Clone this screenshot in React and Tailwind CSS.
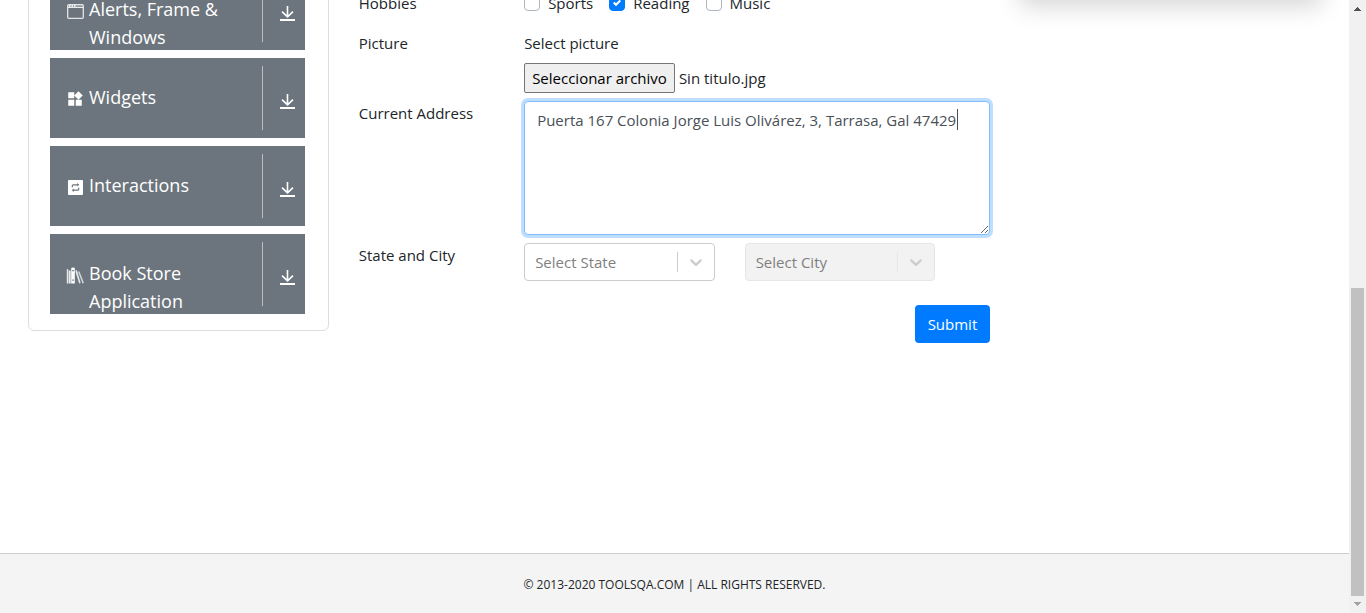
import React from "react";
import { MdWidgets } from "react-icons/md";

function WindowIcon() {
  return (
    <svg viewBox="0 0 17 15" className="h-[15px] w-[17px]" fill="none" stroke="currentColor" aria-hidden="true">
      <rect x="0.7" y="0.7" width="15.6" height="13.6" rx="1" strokeWidth="1.3" strokeOpacity="0.8" />
      <path d="M1 3.5h15" strokeOpacity="0.85" />
      <path d="M1 2h15" strokeWidth="2" strokeOpacity="0.25" />
      <path d="M2 2h1.5M4.5 2H6M7 2h1.5" strokeWidth="1.4" />
    </svg>
  );
}

function RepeatIcon() {
  return (
    <svg viewBox="0 0 15 15" className="size-[15px]" aria-hidden="true">
      <rect width="15" height="15" rx="1" fill="currentColor" />
      <g fill="none" stroke="#6c757d" strokeWidth="1.2" strokeLinejoin="round">
        <path d="M4.3 7.3V5.8q0-1 1-1h4.5M10.7 7.7v1.5q0 1-1 1H5.2" />
      </g>
      <path d="M9.2 3.1v3.4l2.1-1.7zM5.8 8.5v3.4l-2.1-1.7z" fill="#6c757d" />
    </svg>
  );
}

function BooksIcon() {
  return (
    <svg viewBox="0 0 18 17" className="h-[17px] w-[18px]" fill="currentColor" aria-hidden="true">
      <path d="M0.8 2.2l1.4-.2v14.5H0.8zM2.7 3.5h2v13h-2z" opacity="0.85" />
      <path d="M5.2 1.2l.8-.7 2.8.2v15.8H5.2zM6.2 3v1.2h1.6V3zM6.2 12.6v1.2h1.6v-1.2z" fillRule="evenodd" />
      <path d="M9.5 3.4l1.4-.5 3.8 13.2-1.5.4L9.5 5z" opacity="0.8" />
      <path d="M12 4.7l1.4-.5 4.6 11.7-1.5.6z" opacity="0.7" />
    </svg>
  );
}

function ArrowDownIcon() {
  return (
    <svg viewBox="0 0 15 15" className="size-[15px]" fill="none" stroke="currentColor" aria-hidden="true">
      <path d="M7.5 0v10.8M2 5.6l5.5 5.2 5.5-5.2" strokeWidth="1.6" />
      <path d="M0 14h15" strokeWidth="2" />
    </svg>
  );
}

function Chevron() {
  return (
    <svg viewBox="0 0 20 20" className="size-5" fill="currentColor" aria-hidden="true">
      <path d="M4.516 7.548c0.436-0.446 1.043-0.481 1.576 0l3.908 3.747 3.908-3.747c0.533-0.481 1.141-0.446 1.574 0 0.436 0.445 0.408 1.197 0 1.615-0.406 0.418-4.695 4.502-4.695 4.502-0.217 0.223-0.502 0.335-0.787 0.335s-0.57-0.112-0.789-0.335c0 0-4.287-4.084-4.695-4.502s-0.436-1.17 0-1.615z" />
    </svg>
  );
}

const groups = [
  { label: "Alerts, Frame & Windows", icon: <WindowIcon /> },
  { label: "Widgets", icon: <MdWidgets className="size-[18px]" /> },
  { label: "Interactions", icon: <RepeatIcon /> },
  { label: "Book Store Application", icon: <BooksIcon /> },
];

function Sidebar() {
  return (
    <nav className="-mt-8 rounded-md border border-[#dcdddf] pt-px pr-[23px] pb-4 pl-[21px]">
      <ul className="flex flex-col gap-2">
        {groups.map((g) => (
          <li key={g.label}>
            <button
              type="button"
              className="flex h-20 w-full items-start overflow-hidden bg-[#6c757d] py-2 text-left text-lg leading-7 text-white"
            >
              <span className="flex flex-1 gap-[5px] pt-[17px] pl-4">
                <span className="flex h-8 w-[18px] shrink-0 items-center justify-center">{g.icon}</span>
                <span className="max-w-36">{g.label}</span>
              </span>
              <span className="flex h-16 w-[43px] shrink-0 items-center justify-center border-l border-[#bdbdbd] pt-1.5 pl-2">
                <ArrowDownIcon />
              </span>
            </button>
          </li>
        ))}
      </ul>
    </nav>
  );
}

function Hobby({ id, label, checked }) {
  return (
    <span className="flex items-center gap-2">
      <span className="relative size-4">
        <input
          id={id}
          type="checkbox"
          defaultChecked={checked}
          className="peer block size-4 appearance-none rounded border border-[#adb5bd] bg-white checked:border-[#007bff] checked:bg-[#007bff]"
        />
        <svg viewBox="0 0 8 8" className="pointer-events-none absolute inset-1 hidden size-2 peer-checked:block" aria-hidden="true">
          <path fill="#fff" d="M6.564.75l-3.59 3.612-1.538-1.55L0 4.26l2.974 2.99L8 2.193z" />
        </svg>
      </span>
      <label htmlFor={id}>{label}</label>
    </span>
  );
}

function SelectBox({ id, label, disabled }) {
  return (
    <div className="w-4/9 px-[15px]">
      <div className="relative">
        <select
          id={id}
          aria-label={label}
          disabled={disabled}
          className="block h-[38px] w-full appearance-none rounded border border-[#cccccc] bg-white px-2.5 text-[#808080] disabled:border-[#e6e6e6] disabled:bg-[#f2f2f2] disabled:opacity-100"
        >
          <option>{label}</option>
        </select>
        <span
          className={
            disabled
              ? "pointer-events-none absolute inset-y-[9px] right-px flex items-center border-l border-[#e6e6e6] px-2 text-[#cccccc]"
              : "pointer-events-none absolute inset-y-[9px] right-px flex items-center border-l border-[#cccccc] px-2 text-[#cccccc]"
          }
        >
          <Chevron />
        </span>
      </div>
    </div>
  );
}

function Row({ title, htmlFor, children }) {
  return (
    <div className="-mx-[15px] flex">
      <label htmlFor={htmlFor} className="w-1/4 px-[15px]">{title}</label>
      <div className="w-3/4 px-[15px]">{children}</div>
    </div>
  );
}

function PracticeForm() {
  return (
    <form className="-mt-[9px]" onSubmit={(e) => e.preventDefault()}>
      <div className="mb-4">
        <Row title="Hobbies" htmlFor="hobby-sports">
          <div className="flex gap-4">
            <Hobby id="hobby-sports" label="Sports" />
            <Hobby id="hobby-reading" label="Reading" checked />
            <Hobby id="hobby-music" label="Music" />
          </div>
        </Row>
      </div>
      <div className="flex flex-col gap-2">
        <Row title="Picture" htmlFor="picture">
          <span className="mb-2 block">Select picture</span>
          <div className="flex items-center gap-1">
            <input id="picture" type="file" className="sr-only" />
            <label htmlFor="picture" className="h-[30px] rounded-xs border border-[#767676] bg-[#efefef] px-[7px] leading-7 text-black">
              Seleccionar archivo
            </label>
            <span>Sin titulo.jpg</span>
          </div>
        </Row>
        <Row title="Current Address" htmlFor="address">
          <div className="relative">
            <textarea
              id="address"
              rows={5}
              spellCheck={false}
              defaultValue="Puerta 167 Colonia Jorge Luis Olivárez, 3, Tarrasa, Gal 47429"
              className="block w-full rounded border border-[#80bdff] bg-white px-3 py-1.5 leading-6 text-[#495057] ring-3 ring-[#007bff]/25 outline-none"
            />
            <span className="absolute top-2 left-[433px] h-[21px] w-px bg-[#495057]" />
          </div>
        </Row>
        <Row title="State and City" htmlFor="state">
          <div className="-mx-[15px] flex">
            <SelectBox id="state" label="Select State" />
            <SelectBox id="city" label="Select City" disabled />
          </div>
        </Row>
      </div>
      <div className="mt-6 flex justify-end">
        <button type="submit" className="h-[38px] rounded bg-[#007bff] px-[13px] text-white">
          Submit
        </button>
      </div>
    </form>
  );
}

function ScrollBar() {
  return (
    <div className="flex w-[17px] shrink-0 flex-col items-center bg-[#f1f1f1]" aria-hidden="true">
      <svg viewBox="0 0 17 17" className="size-[17px]" fill="#505050" shapeRendering="crispEdges">
        <path d="M8 7h1v1H8zM7 8h3v1H7zM6 9h5v1H6zM5 10h7v1H5z" />
      </svg>
      <div className="flex-1" />
      <div className="h-[308px] w-[13px] bg-[#c1c1c1]" />
      <svg viewBox="0 0 17 17" className="size-[17px]" fill="#a3a3a3" shapeRendering="crispEdges">
        <path d="M5 6h7v1H5zM6 7h5v1H6zM7 8h3v1H7zM8 9h1v1H8z" />
      </svg>
    </div>
  );
}

export default function App() {
  return (
    <div className="flex h-screen overflow-hidden bg-white font-['Open_Sans',sans-serif] text-[15px] leading-6 text-[#212529]">
      <div className="flex min-w-0 flex-1 flex-col overflow-hidden">
        <main className="flex flex-1 items-start px-[13px]">
          <div className="w-1/4 px-[15px]">
            <Sidebar />
          </div>
          <div className="w-1/2 px-[15px]">
            <PracticeForm />
          </div>
          <div className="w-1/4 px-[15px]">
            <aside className="-mt-[42px] h-10 bg-white shadow-[0_8px_24px_rgba(0,0,0,0.17)]" />
          </div>
        </main>
        <footer className="flex h-[60px] items-center justify-center border-t border-[#cccccc] bg-[#f4f4f4] pt-0.5 text-[12px]">
          © 2013-2020 TOOLSQA.COM | ALL RIGHTS RESERVED.
        </footer>
      </div>
      <ScrollBar />
    </div>
  );
}
